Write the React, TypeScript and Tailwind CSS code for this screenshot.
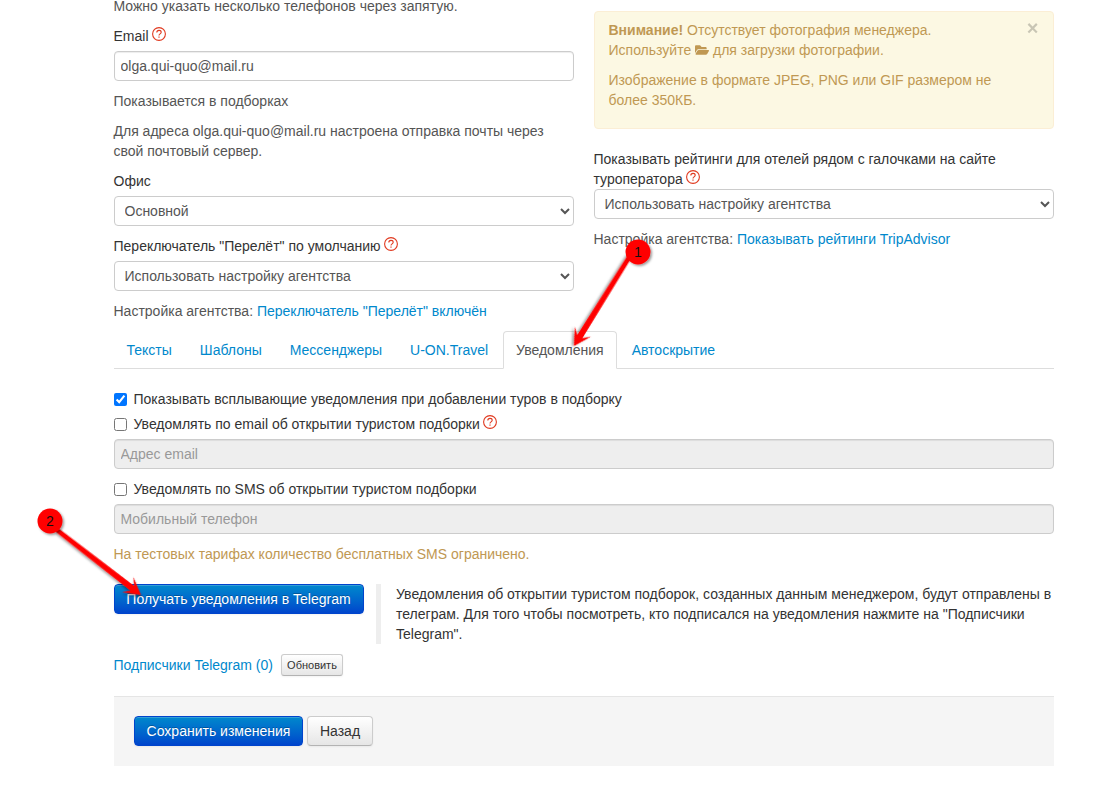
import React from 'react';
import { FaFolderOpen } from 'react-icons/fa';

const inputClass =
  'block w-full h-[30px] px-[6px] bg-white border border-[#ccc] rounded-[4px] text-[14px] text-[#555] shadow-[inset_0_1px_1px_rgba(0,0,0,0.075)]';
const disabledClass =
  'block w-full h-[30px] px-[6px] bg-[#eeeeee] border border-[#ccc] rounded-[4px] text-[14px] placeholder:text-[#999] shadow-[inset_0_1px_1px_rgba(0,0,0,0.075)]';
const selectClass = 'block w-full h-[30px] px-[6px] bg-white border border-[#ccc] rounded-[4px] text-[14px] text-[#555]';
const linkClass = 'text-[#0088cc]';
const primaryBtn =
  'h-[30px] rounded-[4px] border border-[#0044cc] bg-gradient-to-b from-[#0088cc] to-[#0044cc] text-[14px] text-white [text-shadow:0_-1px_0_rgba(0,0,0,0.25)] shadow-[inset_0_1px_0_rgba(255,255,255,0.2),0_1px_2px_rgba(0,0,0,0.05)]';

const Help = () => (
  <svg viewBox="0 0 14 14" className="inline-block w-[14px] h-[14px] ml-[3.5px] align-[0px]">
    <circle cx="7" cy="7" r="6.400" fill="none" stroke="#e0391f" strokeWidth="1.100" />
    <path d="M4.800 5.500C4.800 4.200 5.800 3.400 7 3.400s2.200 .8 2.200 1.900c0 1.600-2.200 1.600-2.200 3.200" fill="none" stroke="#e0391f" strokeWidth="1.100" />
    <rect x="6.400" y="9.500" width="1.200" height="1.200" fill="#e0391f" />
  </svg>
);

const Tab = ({ label, active }: { label: string; active?: boolean }) =>
  active ? (
    <div className="h-[38px] px-3 -mb-px flex items-center bg-white border border-[#ddd] border-b-white rounded-t-[4px] text-[#555]">
      {label}
    </div>
  ) : (
    <div className="h-[37px] px-[13px] mr-[2px] flex items-center text-[#0088cc]">{label}</div>
  );

const Arrow = ({ x1, y1, x2, y2 }: { x1: number; y1: number; x2: number; y2: number }) => {
  const angle = (Math.atan2(y2 - y1, x2 - x1) * 180) / Math.PI;
  const len = Math.hypot(x2 - x1, y2 - y1);
  return (
    <g transform={`translate(${x1} ${y1}) rotate(${angle})`}>
      <path
        d={`M0 -2.200 L${len - 11} -3 L${len - 17} -9.500 L${len} 0 L${len - 17} 9.500 L${len - 11} 3 L0 2.200 Z`}
        fill="#ff0000"
        filter="url(#drop)"
      />
    </g>
  );
};

const Badge = ({ cx, cy, n }: { cx: number; cy: number; n: string }) => (
  <g>
    <circle cx={cx} cy={cy} r="12.500" fill="#ff0000" filter="url(#drop)" />
    <text x={cx} y={cy + 5} textAnchor="middle" fontSize="14" fill="#111" fontFamily="'Liberation Sans', sans-serif">
      {n}
    </text>
  </g>
);

export default function App() {
  return (
    <div className="relative h-[810px] overflow-hidden bg-white font-['Liberation_Sans',Arial,sans-serif] text-[14px] leading-5 text-[#333]">
      <div className="w-[940px] ml-[113.5px] -mt-1">
        <div className="grid grid-cols-2 gap-5">
          <div>
            <p className="text-[#555]">Можно указать несколько телефонов через запятую.</p>
            <label className="block h-5 mt-[10px] mb-[5px]">
              Email
              <Help />
            </label>
            <input className={inputClass} defaultValue="olga.qui-quo@mail.ru" />
            <p className="mt-[10px] text-[#555]">Показывается в подборках</p>
            <p className="mt-[10px] text-[#555]">
              Для адреса olga.qui-quo@mail.ru настроена отправка почты через
              <br />
              свой почтовый сервер.
            </p>
            <label className="block h-5 mt-[10px] mb-[5px]">Офис</label>
            <select className={selectClass} defaultValue="Основной">
              <option>Основной</option>
            </select>
            <label className="block h-5 mt-[10px] mb-[5px]">
              Переключатель "Перелёт" по умолчанию
              <Help />
            </label>
            <select className={selectClass}>
              <option>Использовать настройку агентства</option>
            </select>
            <p className="mt-[10px] text-[#555]">
              Настройка агентства: <a className={linkClass}>Переключатель "Перелёт" включён</a>
            </p>
          </div>

          <div className="pt-[15px]">
            <div className="relative h-[118px] pt-2 px-[14px] bg-[#fcf8e3] border border-[#fbeed5] rounded-[4px] text-[#c09853]">
              <p>
                <b>Внимание!</b> Отсутствует фотография менеджера.
                <br />
                Используйте <FaFolderOpen className="inline-block w-[14px] h-[14px] align-[-2px]" /> для загрузки фотографии.
              </p>
              <p className="mt-[10px]">
                Изображение в формате JPEG, PNG или GIF размером не
                <br />
                более 350КБ.
              </p>
              <span className="absolute right-[14px] top-[6px] text-[20px] font-bold leading-5 text-[#000] opacity-20">×</span>
            </div>
            <label className="block h-10 mt-5">
              Показывать рейтинги для отелей рядом с галочками на сайте
              <br />
              туроператора
              <Help />
            </label>
            <select className={selectClass}>
              <option>Использовать настройку агентства</option>
            </select>
            <p className="mt-[10px] text-[#555]">
              Настройка агентства: <a className={linkClass}>Показывать рейтинги TripAdvisor</a>
            </p>
          </div>
        </div>

        <div className="flex items-end mt-[10px] h-[38px] border-b border-[#ddd]">
          <Tab label="Тексты" />
          <Tab label="Шаблоны" />
          <Tab label="Мессенджеры" />
          <Tab label="U-ON.Travel" />
          <Tab label="Уведомления" active />
          <div className="w-[2px]" />
          <Tab label="Автоскрытие" />
        </div>

        <label className="flex items-center gap-[7px] mt-5 h-5">
          <input type="checkbox" defaultChecked className="w-[13px] h-[13px] accent-[#0075ff]" />
          Показывать всплывающие уведомления при добавлении туров в подборку
        </label>
        <label className="flex items-center gap-[7px] mt-[5px] h-5">
          <input type="checkbox" className="w-[13px] h-[13px]" />
          <span>
            Уведомлять по email об открытии туристом подборки
            <Help />
          </span>
        </label>
        <input disabled placeholder="Адрес email" className={`${disabledClass} mt-[5px]`} />
        <label className="flex items-center gap-[7px] mt-[10px] h-5">
          <input type="checkbox" className="w-[13px] h-[13px]" />
          Уведомлять по SMS об открытии туристом подборки
        </label>
        <input disabled placeholder="Мобильный телефон" className={`${disabledClass} mt-[5px]`} />
        <p className="mt-[10px] text-[#c09853]">На тестовых тарифах количество бесплатных SMS ограничено.</p>

        <div className="flex mt-5">
          <button className={`${primaryBtn} w-[250px] shrink-0`}>Получать уведомления в Telegram</button>
          <div className="ml-3 pl-[15.5px] border-l-[5px] border-[#eeeeee] h-[60px]">
            <p className="-mr-1">
              Уведомления об открытии туристом подборок, созданных данным менеджером, будут отправлены в
              телеграм. Для того чтобы посмотреть, кто подписался на уведомления нажмите на "Подписчики
              Telegram".
            </p>
          </div>
        </div>

        <div className="flex items-center mt-[10px] h-[22px]">
          <a className={linkClass}>Подписчики Telegram (0)</a>
          <button className="ml-2 w-[62px] h-[22px] border border-[#ccc] border-b-[#b3b3b3] rounded-[3px] bg-gradient-to-b from-white to-[#e6e6e6] text-[11px] text-[#333] shadow-[inset_0_1px_0_rgba(255,255,255,0.2),0_1px_2px_rgba(0,0,0,0.05)]">
            Обновить
          </button>
        </div>

        <div className="flex gap-1 mt-5 h-[70px] pt-[19px] pl-[20.5px] bg-[#f5f5f5] border-t border-[#e5e5e5]">
          <button className={`${primaryBtn} w-[169px]`}>Сохранить изменения</button>
          <button className="w-[66px] h-[30px] border border-[#ccc] border-b-[#b3b3b3] rounded-[4px] bg-gradient-to-b from-white to-[#e6e6e6] text-[#333] shadow-[inset_0_1px_0_rgba(255,255,255,0.2),0_1px_2px_rgba(0,0,0,0.05)]">
            Назад
          </button>
        </div>
      </div>

      <svg className="absolute left-0 top-0 w-[1108px] h-[810px] pointer-events-none" viewBox="0 0 1108 810">
        <defs>
          <filter id="drop" x="-30%" y="-30%" width="160%" height="160%">
            <feDropShadow dx="1.500" dy="1.500" stdDeviation="1.200" floodColor="#000" floodOpacity="0.4" />
          </filter>
        </defs>
        <Arrow x1={630} y1={256} x2={574} y2={346} />
        <Arrow x1={57} y1={530} x2={141} y2={595} />
        <Badge cx={638} cy={252} n="1" />
        <Badge cx={50} cy={521} n="2" />
      </svg>
    </div>
  );
}
